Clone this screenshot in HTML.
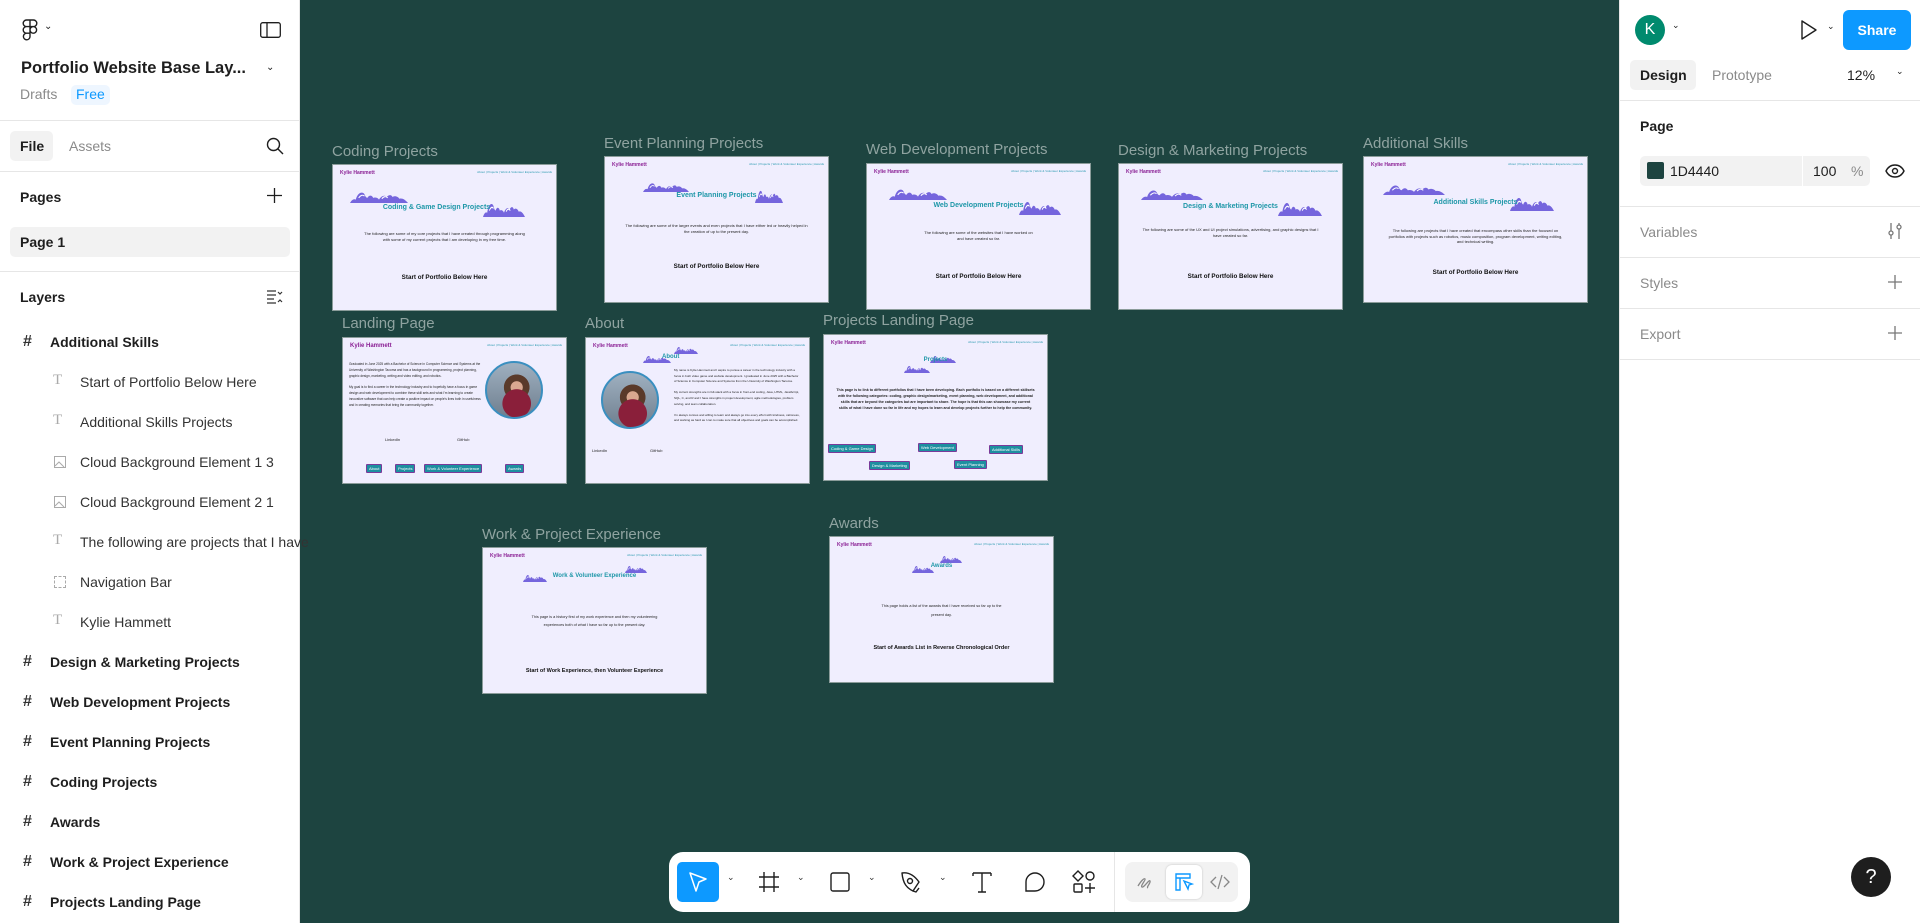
<!DOCTYPE html>
<html><head><meta charset="utf-8">
<style>
*{box-sizing:border-box;margin:0;padding:0}
body{width:1920px;height:923px;overflow:hidden;background:#1d4440;font-family:"Liberation Sans",sans-serif;position:relative}
.abs{position:absolute}
#left{left:0;top:0;width:300px;height:923px;background:#fff;border-right:1px solid #e6e6e6}
#right{left:1619px;top:0;width:301px;height:923px;background:#fff;border-left:1px solid #e6e6e6}
.hr{position:absolute;left:0;right:0;height:1px;background:#e6e6e6}
.t{position:absolute;white-space:nowrap;color:#1e1e1e;font-size:14px}
.bold{font-weight:bold}
.gray{color:#8a8a8a}
.lay{position:absolute;left:50px;font-size:14px;font-weight:bold;color:#1e1e1e;white-space:nowrap}
.sub{position:absolute;left:80px;font-size:14px;color:#333;white-space:nowrap}
.hash{position:absolute;left:23px;font-size:16px;color:#333;font-weight:bold}
.ti{position:absolute;left:53px;font-size:15px;color:#aaa;font-family:"Liberation Serif",serif}
.frame{position:absolute;width:225px;height:147px;background:#f0eefe;border:1px solid #8b9c9a;overflow:hidden}
.flab{position:absolute;color:#8fa3a0;font-size:15px;white-space:nowrap}
.kn{position:absolute;left:7px;top:5px;font-size:5px;font-weight:bold;color:#8a1f94}
.nav{position:absolute;right:4px;top:5px;font-size:3px;color:#2a9ab0;white-space:nowrap}
.ft{position:absolute;left:0;right:0;text-align:center;font-weight:bold;color:#1e97a8;font-size:7px}
.fp{position:absolute;left:20px;right:20px;text-align:center;font-size:4px;line-height:5.5px;color:#222}
.fb{position:absolute;left:0;right:0;text-align:center;font-size:6.3px;font-weight:bold;color:#111}
.btn{position:absolute;background:#1e8fa0;border:1px solid #7a3a9a;color:#fff;font-size:4px;padding:1px 2px;white-space:nowrap;border-radius:1px}
.photo{position:absolute;border-radius:50%;border:2px solid #3a8fc0;background:radial-gradient(circle at 55% 75%,#8a1f3a 0 28%,transparent 29%),radial-gradient(circle at 55% 45%,#d9a890 0 14%,#5a3a2a 15% 30%,transparent 31%),linear-gradient(#9fb0c0,#6f7f8f)}
</style></head><body>

<div id="left" class="abs">
 <svg class="abs" style="left:22px;top:19px" width="16" height="22" viewBox="0 0 16 22" fill="none" stroke="#1e1e1e" stroke-width="1.4"><path d="M8 1H4.5a3.3 3.3 0 0 0 0 6.6H8zM8 1h3.5a3.3 3.3 0 0 1 0 6.6H8zM8 7.6H4.5a3.3 3.3 0 0 0 0 6.6H8zM8 14.2H4.5a3.3 3.3 0 1 0 3.5 3.3zM11.3 7.6a3.3 3.3 0 1 1 0 6.6 3.3 3.3 0 0 1 0-6.6z"/></svg>
 <div class="t" style="left:44px;top:21px;font-size:10px">⌄</div>
 <svg class="abs" style="left:260px;top:22px" width="21" height="16" viewBox="0 0 21 16" fill="none" stroke="#1e1e1e" stroke-width="1.3"><rect x="0.7" y="0.7" width="19.6" height="14.6" rx="2"/><path d="M7 1v14"/></svg>
 <div class="t bold" style="left:21px;top:59px;font-size:16.5px">Portfolio Website Base Lay...</div>
 <div class="t" style="left:266px;top:62px;font-size:10px">⌄</div>
 <div class="t gray" style="left:20px;top:86px;font-size:14px">Drafts</div>
 <div class="abs" style="left:71px;top:85px;width:39px;height:20px;background:#eef6ff;border-radius:5px"></div>
 <div class="t" style="left:76px;top:86px;font-size:14px;color:#0d99ff">Free</div>
 <div class="hr" style="top:120px"></div>
 <div class="abs" style="left:10px;top:131px;width:43px;height:30px;background:#f2f2f2;border-radius:5px"></div>
 <div class="t bold" style="left:20px;top:138px">File</div>
 <div class="t gray" style="left:69px;top:138px">Assets</div>
 <svg class="abs" style="left:266px;top:137px" width="18" height="18" viewBox="0 0 18 18" fill="none" stroke="#1e1e1e" stroke-width="1.4"><circle cx="7.5" cy="7.5" r="6"/><path d="M12 12l5 5"/></svg>
 <div class="hr" style="top:171px"></div>
 <div class="t bold" style="left:20px;top:189px">Pages</div>
 <svg class="abs" style="left:267px;top:188px" width="15" height="15" viewBox="0 0 15 15" stroke="#1e1e1e" stroke-width="1.3"><path d="M7.5 0v15M0 7.5h15"/></svg>
 <div class="abs" style="left:10px;top:227px;width:280px;height:30px;background:#f2f2f2;border-radius:5px"></div>
 <div class="t bold" style="left:20px;top:234px">Page 1</div>
 <div class="hr" style="top:271px"></div>
 <div class="t bold" style="left:20px;top:289px">Layers</div>
 <svg class="abs" style="left:267px;top:290px" width="16" height="14" viewBox="0 0 16 14" fill="none" stroke="#333" stroke-width="1.2"><path d="M0 1h9M0 5h9M0 9h7M0 13h9M11 2l2 2 2-2M11 12l2-2 2 2"/></svg>
 <div class="hash" style="top:333px">#</div><div class="lay" style="top:334px">Additional Skills</div>
 <div class="ti" style="top:372px">T</div><div class="sub" style="top:374px">Start of Portfolio Below Here</div>
 <div class="ti" style="top:412px">T</div><div class="sub" style="top:414px">Additional Skills Projects</div>
 <svg class="abs" style="left:54px;top:456px" width="12" height="12"><rect x="0.5" y="0.5" width="11" height="11" fill="none" stroke="#aaa"/><path d="M1 10l4-4 5 5" stroke="#aaa" fill="none"/></svg><div class="sub" style="top:454px">Cloud Background Element 1 3</div>
 <svg class="abs" style="left:54px;top:496px" width="12" height="12"><rect x="0.5" y="0.5" width="11" height="11" fill="none" stroke="#aaa"/><path d="M1 10l4-4 5 5" stroke="#aaa" fill="none"/></svg><div class="sub" style="top:494px">Cloud Background Element 2 1</div>
 <div class="ti" style="top:532px">T</div><div class="sub" style="top:534px">The following are projects that I have</div>
 <div class="abs" style="left:54px;top:576px;width:12px;height:12px;border:1px dashed #aaa"></div><div class="sub" style="top:574px">Navigation Bar</div>
 <div class="ti" style="top:612px">T</div><div class="sub" style="top:614px">Kylie Hammett</div>
 <div class="hash" style="top:653px">#</div><div class="lay" style="top:654px">Design &amp; Marketing Projects</div>
 <div class="hash" style="top:693px">#</div><div class="lay" style="top:694px">Web Development Projects</div>
 <div class="hash" style="top:733px">#</div><div class="lay" style="top:734px">Event Planning Projects</div>
 <div class="hash" style="top:773px">#</div><div class="lay" style="top:774px">Coding Projects</div>
 <div class="hash" style="top:813px">#</div><div class="lay" style="top:814px">Awards</div>
 <div class="hash" style="top:853px">#</div><div class="lay" style="top:854px">Work &amp; Project Experience</div>
 <div class="hash" style="top:893px">#</div><div class="lay" style="top:894px">Projects Landing Page</div>
</div>

<svg width="0" height="0" style="position:absolute"><defs>
<symbol id="cl" viewBox="0 0 60 14" preserveAspectRatio="none"><path d="M0 14c2-4 4-5 6-4 1-5 4-9 7-8 3 1 2 5 5 6 2-4 5-3 6 0 2-1 5 0 6 2 2-4 6-6 8-3 2-3 5-3 6 0 3-2 6 0 7 2 3-1 6 1 9 5z" fill="#7565dd"/><path d="M9 8c2-3 4-4 6-2M33 9c2-3 4-3 6-1" stroke="#fff" fill="none" stroke-width="1.2"/></symbol>
</defs></svg>

<!-- Coding -->
<div class="flab" style="left:332px;top:143px">Coding Projects</div>
<div class="frame" style="left:332px;top:164px">
 <div class="kn">Kylie Hammett</div><div class="nav">About | Projects | Work &amp; Volunteer Experience | Awards</div>
 <svg class="abs" style="left:17px;top:26px" width="58" height="12"><use href="#cl"/></svg>
 <svg class="abs" style="left:150px;top:37px" width="42" height="15"><use href="#cl"/></svg>
 <div class="ft" style="top:39px;right:16px">Coding &amp; Game Design Projects</div>
 <div class="fp" style="top:66px;left:30px;right:30px">The following are some of my core projects that I have created through programming along with some of my current projects that I am developing in my free time.</div>
 <div class="fb" style="top:109px">Start of Portfolio Below Here</div>
</div>
<!-- Event -->
<div class="flab" style="left:604px;top:135px">Event Planning Projects</div>
<div class="frame" style="left:604px;top:156px">
 <div class="kn">Kylie Hammett</div><div class="nav">About | Projects | Work &amp; Volunteer Experience | Awards</div>
 <svg class="abs" style="left:38px;top:25px" width="46" height="10"><use href="#cl"/></svg>
 <svg class="abs" style="left:150px;top:32px" width="28" height="14"><use href="#cl"/></svg>
 <div class="ft" style="top:35px">Event Planning Projects</div>
 <div class="fp" style="top:66px">The following are some of the larger events and even projects that I have either led or heavily helped in the creation of up to the present day.</div>
 <div class="fb" style="top:106px">Start of Portfolio Below Here</div>
</div>
<!-- Web -->
<div class="flab" style="left:866px;top:141px">Web Development Projects</div>
<div class="frame" style="left:866px;top:163px">
 <div class="kn">Kylie Hammett</div><div class="nav">About | Projects | Work &amp; Volunteer Experience | Awards</div>
 <svg class="abs" style="left:22px;top:24px" width="58" height="12"><use href="#cl"/></svg>
 <svg class="abs" style="left:152px;top:36px" width="42" height="15"><use href="#cl"/></svg>
 <div class="ft" style="top:38px">Web Development Projects</div>
 <div class="fp" style="top:66px;left:55px;right:55px">The following are some of the websites that I have worked on and have created so far.</div>
 <div class="fb" style="top:109px">Start of Portfolio Below Here</div>
</div>
<!-- Design -->
<div class="flab" style="left:1118px;top:142px">Design &amp; Marketing Projects</div>
<div class="frame" style="left:1118px;top:163px">
 <div class="kn">Kylie Hammett</div><div class="nav">About | Projects | Work &amp; Volunteer Experience | Awards</div>
 <svg class="abs" style="left:22px;top:25px" width="62" height="11"><use href="#cl"/></svg>
 <svg class="abs" style="left:159px;top:37px" width="44" height="15"><use href="#cl"/></svg>
 <div class="ft" style="top:39px">Design &amp; Marketing Projects</div>
 <div class="fp" style="top:63px">The following are some of the UX and UI project simulations, advertising, and graphic designs that I have created so far.</div>
 <div class="fb" style="top:109px">Start of Portfolio Below Here</div>
</div>
<!-- Additional -->
<div class="flab" style="left:1363px;top:135px">Additional Skills</div>
<div class="frame" style="left:1363px;top:156px">
 <div class="kn">Kylie Hammett</div><div class="nav">About | Projects | Work &amp; Volunteer Experience | Awards</div>
 <svg class="abs" style="left:19px;top:27px" width="62" height="11"><use href="#cl"/></svg>
 <svg class="abs" style="left:146px;top:39px" width="44" height="15"><use href="#cl"/></svg>
 <div class="ft" style="top:42px">Additional Skills Projects</div>
 <div class="fp" style="top:71px;left:22px;right:22px">The following are projects that I have created that encompass other skills than the focused on portfolios with projects such as robotics, music composition, program development, writing editing, and technical writing.</div>
 <div class="fb" style="top:112px">Start of Portfolio Below Here</div>
</div>
<!-- Landing -->
<div class="flab" style="left:342px;top:315px">Landing Page</div>
<div class="frame" style="left:342px;top:337px">
 <div class="kn" style="font-size:6px">Kylie Hammett</div><div class="nav">About | Projects | Work &amp; Volunteer Experience | Awards</div>
 <div class="fp" style="top:24px;left:6px;right:80px;text-align:left;font-size:3.2px;line-height:5.8px">Graduated in June 2025 with a Bachelor of Science in Computer Science and Systems at the University of Washington Tacoma and has a background in programming, project planning, graphic design, marketing, writing and video editing, and robotics.<br><br>My goal is to find a career in the technology industry and to hopefully have a focus in game design and web development to combine these skill sets and what I'm learning to create innovative software that can help create a positive impact on people's lives both in usefulness and in creating memories that bring the community together.</div>
 <div class="photo" style="left:142px;top:23px;width:58px;height:58px"></div>
 <div class="t" style="left:42px;top:99px;font-size:4px">LinkedIn</div><div class="t" style="left:114px;top:99px;font-size:4px">GitHub</div>
 <div class="btn" style="left:23px;top:126px">About</div><div class="btn" style="left:52px;top:126px">Projects</div><div class="btn" style="left:81px;top:126px">Work &amp; Volunteer Experience</div><div class="btn" style="left:162px;top:126px">Awards</div>
</div>
<!-- About -->
<div class="flab" style="left:585px;top:315px">About</div>
<div class="frame" style="left:585px;top:337px">
 <div class="kn">Kylie Hammett</div><div class="nav">About | Projects | Work &amp; Volunteer Experience | Awards</div>
 <svg class="abs" style="left:57px;top:17px" width="28" height="8"><use href="#cl"/></svg>
 <svg class="abs" style="left:88px;top:8px" width="24" height="8"><use href="#cl"/></svg>
 <div class="abs bold" style="left:76px;top:16px;font-size:6px;color:#1e97a8">About</div>
 <div class="photo" style="left:15px;top:33px;width:58px;height:58px"></div>
 <div class="fp" style="top:30px;left:88px;right:8px;text-align:left;font-size:3px;line-height:5.6px">My name is Kylie Hammett and I aspire to pursue a career in the technology industry with a focus in both video game and website development. I graduated in June 2025 with a Bachelor of Science in Computer Science and Systems from the University of Washington Tacoma.<br><br>My current strengths are in full-stack with a focus in front-end coding, Java, HTML, JavaScript, SQL, C, and R and I have strengths in project development, agile methodologies, problem solving, and team collaboration.<br><br>I'm always curious and willing to learn and always go into every effort with kindness, calmness, and working as hard as I can to make sure that all objectives and goals can be accomplished.</div>
 <div class="t" style="left:6px;top:110px;font-size:4px">LinkedIn</div><div class="t" style="left:64px;top:110px;font-size:4px">GitHub</div>
</div>
<!-- Projects landing -->
<div class="flab" style="left:823px;top:312px">Projects Landing Page</div>
<div class="frame" style="left:823px;top:334px">
 <div class="kn">Kylie Hammett</div><div class="nav">About | Projects | Work &amp; Volunteer Experience | Awards</div>
 <svg class="abs" style="left:80px;top:30px" width="26" height="8"><use href="#cl"/></svg>
 <svg class="abs" style="left:106px;top:20px" width="26" height="8"><use href="#cl"/></svg>
 <div class="ft" style="top:22px;font-size:6px">Projects</div>
 <div class="fp" style="top:52px;left:12px;right:12px;font-weight:bold;font-size:3.6px;line-height:6px">This page is to link to different portfolios that I have been developing. Each portfolio is based on a different skillsets with the following categories: coding, graphic design/marketing, event planning, web development, and additional skills that are beyond the categories but are important to share. The hope is that this can showcase my current skills of what I have done so far in life and my hopes to learn and develop projects further to help the community.</div>
 <div class="btn" style="left:4px;top:109px">Coding &amp; Game Design</div><div class="btn" style="left:94px;top:108px">Web Development</div><div class="btn" style="left:165px;top:110px">Additional Skills</div>
 <div class="btn" style="left:45px;top:126px">Design &amp; Marketing</div><div class="btn" style="left:130px;top:125px">Event Planning</div>
</div>
<!-- Work -->
<div class="flab" style="left:482px;top:526px">Work &amp; Project Experience</div>
<div class="frame" style="left:482px;top:547px">
 <div class="kn">Kylie Hammett</div><div class="nav">About | Projects | Work &amp; Volunteer Experience | Awards</div>
 <svg class="abs" style="left:40px;top:26px" width="24" height="8"><use href="#cl"/></svg>
 <svg class="abs" style="left:142px;top:17px" width="22" height="8"><use href="#cl"/></svg>
 <div class="ft" style="top:25px;font-size:6px">Work &amp; Volunteer Experience</div>
 <div class="fp" style="top:65px;left:40px;right:40px;font-size:3.8px;line-height:8px">This page is a history first of my work experience and then my volunteering experiences both of what I have so far up to the present day.</div>
 <div class="fb" style="top:120px;font-size:5.5px">Start of Work Experience, then Volunteer Experience</div>
</div>
<!-- Awards -->
<div class="flab" style="left:829px;top:515px">Awards</div>
<div class="frame" style="left:829px;top:536px">
 <div class="kn">Kylie Hammett</div><div class="nav">About | Projects | Work &amp; Volunteer Experience | Awards</div>
 <svg class="abs" style="left:82px;top:28px" width="22" height="8"><use href="#cl"/></svg>
 <svg class="abs" style="left:110px;top:18px" width="22" height="8"><use href="#cl"/></svg>
 <div class="ft" style="top:26px;font-size:6px">Awards</div>
 <div class="fp" style="top:65px;left:45px;right:45px;font-size:3.8px;line-height:9px">This page holds a list of the awards that I have received so far up to the present day.</div>
 <div class="fb" style="top:108px;font-size:5.5px">Start of Awards List in Reverse Chronological Order</div>
</div>

<!-- toolbar -->
<div class="abs" style="left:669px;top:852px;width:581px;height:60px;background:#fff;border-radius:14px"></div>
<div class="abs" style="left:677px;top:862px;width:42px;height:40px;background:#0d99ff;border-radius:5px"></div>
<svg class="abs" style="left:688px;top:871px" width="20" height="22" viewBox="0 0 20 22" fill="none" stroke="#fff" stroke-width="1.5" stroke-linejoin="round"><path d="M2 2l16 6-7 3-3 9z"/></svg>
<div class="abs" style="left:727px;top:872px;font-size:9px;color:#333">⌄</div>
<svg class="abs" style="left:758px;top:871px" width="22" height="22" viewBox="0 0 22 22" stroke="#1e1e1e" stroke-width="1.4"><path d="M6 1v20M16 1v20M1 6h20M1 16h20"/></svg>
<div class="abs" style="left:797px;top:872px;font-size:9px;color:#333">⌄</div>
<svg class="abs" style="left:829px;top:871px" width="22" height="22" viewBox="0 0 22 22" fill="none" stroke="#1e1e1e" stroke-width="1.4"><rect x="2" y="2" width="18" height="18" rx="2"/></svg>
<div class="abs" style="left:868px;top:872px;font-size:9px;color:#333">⌄</div>
<svg class="abs" style="left:899px;top:870px" width="24" height="24" viewBox="0 0 24 24" fill="none" stroke="#1e1e1e" stroke-width="1.4" stroke-linejoin="round"><path d="M3 3c6-1 12 2 17 9l-6 9c-6-3-10-7-11-18z"/><circle cx="11" cy="11" r="2.5"/><path d="M14 21l3 1 3-4"/></svg>
<div class="abs" style="left:939px;top:872px;font-size:9px;color:#333">⌄</div>
<svg class="abs" style="left:972px;top:871px" width="20" height="22" viewBox="0 0 20 22" fill="none" stroke="#1e1e1e" stroke-width="1.4"><path d="M1 2h18M1 2v3M19 2v3M10 2v19M6 21h8"/></svg>
<svg class="abs" style="left:1024px;top:871px" width="22" height="22" viewBox="0 0 22 22" fill="none" stroke="#1e1e1e" stroke-width="1.4"><path d="M2 20V11a9 9 0 1 1 9 9z"/></svg>
<svg class="abs" style="left:1072px;top:870px" width="24" height="24" viewBox="0 0 24 24" fill="none" stroke="#1e1e1e" stroke-width="1.4"><path d="M6 1l5 5-5 5-5-5z"/><circle cx="18" cy="6" r="4"/><rect x="2" y="14" width="8" height="8" rx="1"/><path d="M18 13v10M13 18h10"/></svg>
<div class="abs" style="left:1114px;top:852px;width:1px;height:60px;background:#e6e6e6"></div>
<div class="abs" style="left:1125px;top:862px;width:113px;height:40px;background:#f2f2f2;border-radius:8px"></div>
<div class="abs" style="left:1166px;top:865px;width:36px;height:34px;background:#fff;border-radius:6px;box-shadow:0 0 2px rgba(0,0,0,.2)"></div>
<svg class="abs" style="left:1135px;top:872px" width="20" height="20" viewBox="0 0 20 20" fill="none" stroke="#888" stroke-width="1.3"><path d="M3 14c3-5 6-8 7-7s-5 7-3 8 7-8 8-6-4 6-2 7"/></svg>
<svg class="abs" style="left:1174px;top:872px" width="20" height="20" viewBox="0 0 20 20" fill="none" stroke="#0d99ff" stroke-width="1.4"><path d="M2 2h14v4H6v12H2z M2 6h4 M10 9l8 3-3 1-1 4z"/></svg>
<svg class="abs" style="left:1210px;top:873px" width="20" height="18" viewBox="0 0 20 18" fill="none" stroke="#888" stroke-width="1.3"><path d="M6 4L1 9l5 5M14 4l5 5-5 5M12 2L8 16"/></svg>

<div id="right" class="abs">
 <div class="abs" style="left:15px;top:15px;width:30px;height:30px;border-radius:50%;background:#008a6e;color:#fff;font-size:16px;text-align:center;line-height:30px">K</div>
 <div class="t" style="left:52px;top:20px;font-size:9px">⌄</div>
 <svg class="abs" style="left:180px;top:19px" width="18" height="22" viewBox="0 0 18 22" fill="none" stroke="#1e1e1e" stroke-width="1.4" stroke-linejoin="round"><path d="M2 2l14 9-14 9z"/></svg>
 <div class="t" style="left:207px;top:21px;font-size:9px">⌄</div>
 <div class="abs" style="left:223px;top:10px;width:68px;height:40px;background:#0d99ff;border-radius:6px;color:#fff;font-weight:bold;font-size:14px;text-align:center;line-height:40px">Share</div>
 <div class="abs" style="left:10px;top:60px;width:66px;height:30px;background:#f2f2f2;border-radius:5px"></div>
 <div class="t bold" style="left:20px;top:67px">Design</div>
 <div class="t gray" style="left:92px;top:67px">Prototype</div>
 <div class="t" style="left:227px;top:67px">12%</div>
 <div class="t" style="left:276px;top:66px;font-size:9px">⌄</div>
 <div class="hr" style="top:100px"></div>
 <div class="t bold" style="left:20px;top:118px">Page</div>
 <div class="abs" style="left:20px;top:156px;width:230px;height:30px;background:#f2f2f2;border-radius:5px"></div>
 <div class="abs" style="left:27px;top:162px;width:17px;height:17px;background:#1d4440;border-radius:2px"></div>
 <div class="t" style="left:50px;top:163px">1D4440</div>
 <div class="abs" style="left:182px;top:156px;width:1px;height:30px;background:#fff"></div>
 <div class="t" style="left:193px;top:163px">100</div>
 <div class="t gray" style="left:231px;top:163px">%</div>
 <svg class="abs" style="left:265px;top:163px" width="20" height="16" viewBox="0 0 20 16" fill="none" stroke="#1e1e1e" stroke-width="1.4"><path d="M1 8c4-8 14-8 18 0-4 8-14 8-18 0z"/><circle cx="10" cy="8" r="2.5"/></svg>
 <div class="hr" style="top:206px"></div>
 <div class="t gray" style="left:20px;top:224px">Variables</div>
 <svg class="abs" style="left:266px;top:222px" width="18" height="18" viewBox="0 0 18 18" fill="none" stroke="#777" stroke-width="1.3"><path d="M5 1v8M5 13v4M13 1v2M13 7v10"/><circle cx="5" cy="11" r="2"/><circle cx="13" cy="5" r="2"/></svg>
 <div class="hr" style="top:257px"></div>
 <div class="t gray" style="left:20px;top:275px">Styles</div>
 <svg class="abs" style="left:268px;top:275px" width="14" height="14" stroke="#777" stroke-width="1.3"><path d="M7 0v14M0 7h14"/></svg>
 <div class="hr" style="top:308px"></div>
 <div class="t gray" style="left:20px;top:326px">Export</div>
 <svg class="abs" style="left:268px;top:326px" width="14" height="14" stroke="#777" stroke-width="1.3"><path d="M7 0v14M0 7h14"/></svg>
 <div class="hr" style="top:359px"></div>
 <div class="abs" style="left:231px;top:857px;width:40px;height:40px;border-radius:50%;background:#1e1e1e;color:#fff;font-size:20px;text-align:center;line-height:40px">?</div>
</div>
</body></html>
